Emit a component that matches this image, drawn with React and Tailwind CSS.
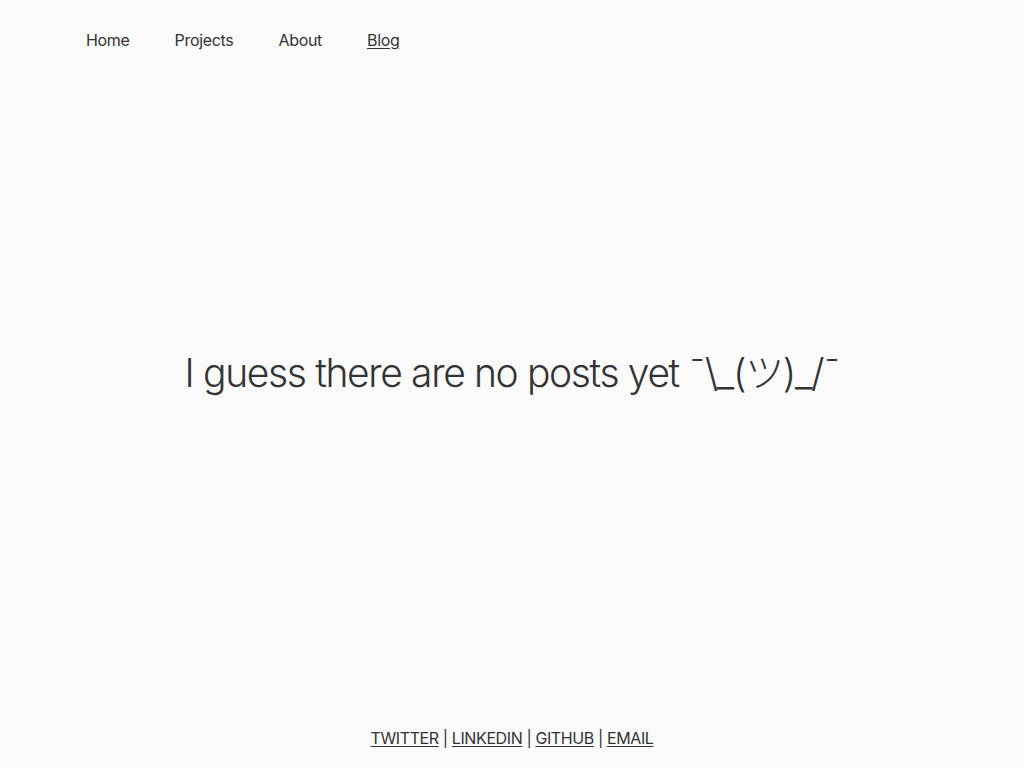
import React from "react";

const links = ["Home", "Projects", "About", "Blog"];
const socials = ["TWITTER", "LINKEDIN", "GITHUB", "EMAIL"];

const App = () => {
  return (
    <div
      className="min-h-screen h-[768px] flex flex-col bg-[#fafafa] text-[#333]"
      style={{ fontFamily: "Inter, 'Noto Sans CJK JP', sans-serif" }}
    >
      {/* Nav */}
      <nav className="flex items-center gap-[45px] pl-[86px] pt-[28px] text-base tracking-[-0.02em]">
        {links.map((link) => (
          <a
            key={link}
            href="#"
            className={link === "Blog" ? "underline underline-offset-2" : ""}
          >
            {link}
          </a>
        ))}
      </nav>

      {/* Main */}
      <main className="flex-1 flex items-center justify-center pb-[32px]">
        <h1 className="text-[39px] font-light tracking-[-0.035em]">
          I guess there are no posts yet ¯\_(ツ)_/¯
        </h1>
      </main>

      {/* Footer */}
      <footer className="flex justify-center pb-[18px] text-base tracking-[-0.025em]">
        {socials.map((s, i) => (
          <span key={s}>
            <a href="#" className="underline underline-offset-2">
              {s}
            </a>
            {i < socials.length - 1 && <span>&nbsp;|&nbsp;</span>}
          </span>
        ))}
      </footer>
    </div>
  );
};

export default App;
